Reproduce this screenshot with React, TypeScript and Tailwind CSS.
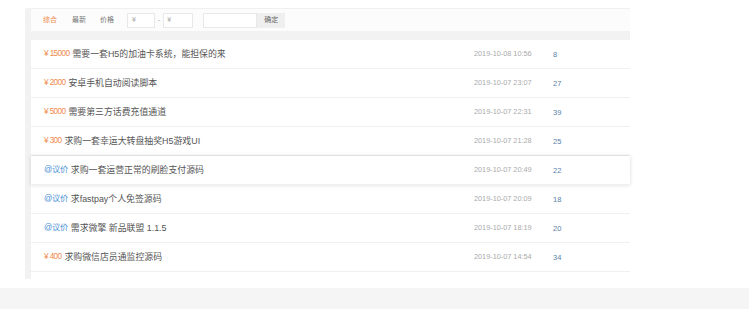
import React from "react";

type Row = { price: string; bid?: boolean; title: string; date: string; count: string; active?: boolean };

const rows: Row[] = [
  { price: "¥ 15000", title: "需要一套H5的加油卡系统，能担保的来", date: "2019-10-08 10:56", count: "8" },
  { price: "¥ 2000", title: "安卓手机自动阅读脚本", date: "2019-10-07 23:07", count: "27" },
  { price: "¥ 5000", title: "需要第三方话费充值通道", date: "2019-10-07 22:31", count: "39" },
  { price: "¥ 300", title: "求购一套幸运大转盘抽奖H5游戏UI", date: "2019-10-07 21:28", count: "25" },
  { price: "@议价", bid: true, title: "求购一套运营正常的刷脸支付源码", date: "2019-10-07 20:49", count: "22", active: true },
  { price: "@议价", bid: true, title: "求fastpay个人免签源码", date: "2019-10-07 20:09", count: "18" },
  { price: "@议价", bid: true, title: "需求微擎 新品联盟 1.1.5", date: "2019-10-07 18:19", count: "20" },
  { price: "¥ 400", title: "求购微信店员通监控源码", date: "2019-10-07 14:54", count: "34" },
];

export default function App() {
  return (
    <div
      className="w-[749px] h-[312px] bg-white overflow-hidden"
      style={{ fontFamily: '"Liberation Sans", "Noto Sans CJK SC", sans-serif' }}
    >
      <div className="flex pt-[8px] pl-[25px] h-[279px]">
        <div className="w-[6px] h-[271px] bg-[#f2f2f2]" />
        <div className="w-[599px] flex flex-col">
          <div className="h-[23px] bg-[#fcfcfc] border-t border-[#f0f0f0] flex items-center pl-[12px] pt-[1px] text-[7px] text-[#777]">
            <span className="text-[#f08a4b]">综合</span>
            <span className="ml-[15px]">最新</span>
            <span className="ml-[14px]">价格</span>
            <div className="ml-[13px] w-[28px] h-[15px] border border-[#e8e8e8] bg-white flex items-center pl-[4px] text-[#aaa]">¥</div>
            <span className="mx-[3px] text-[#aaa]">-</span>
            <div className="w-[30px] h-[15px] border border-[#e8e8e8] bg-white flex items-center pl-[3px] text-[#aaa]">¥</div>
            <div className="ml-[10px] w-[54px] h-[15px] border border-[#e8e8e8] bg-white" />
            <div className="w-[28px] h-[15px] bg-[#efefef] flex items-center justify-center text-[#666]">确定</div>
          </div>
          <div className="h-[9px] bg-[#f2f2f2]" />
          {rows.map((r, i) => (
            <div
              key={i}
              className={
                "h-[29px] grid grid-cols-[430px_79px_1fr] items-center pl-[13px] pt-[1px] bg-white border-b border-[#f0f0f0] " +
                (r.active ? "relative shadow-[0_0_4px_rgba(0,0,0,0.15)]" : "")
              }
            >
              <div className="text-[8.9px] text-[#555] whitespace-nowrap flex items-center">
                <span
                  className={
                    r.bid
                      ? "text-[#4a8fd6] text-[8.2px] tracking-[-0.3px]"
                      : "text-[#f08a4b] text-[8.2px] tracking-[-0.6px]"
                  }
                >
                  {r.price}
                </span>
                <span className="ml-[3px]">{r.title}</span>
              </div>
              <div className="text-[7.3px] text-[#aaa] whitespace-nowrap">{r.date}</div>
              <div className="text-[7.5px] text-[#5a7fa8]">{r.count}</div>
            </div>
          ))}
        </div>
      </div>
      <div className="mt-[9px] h-[21px] bg-[#f5f5f5]" />
    </div>
  );
}
